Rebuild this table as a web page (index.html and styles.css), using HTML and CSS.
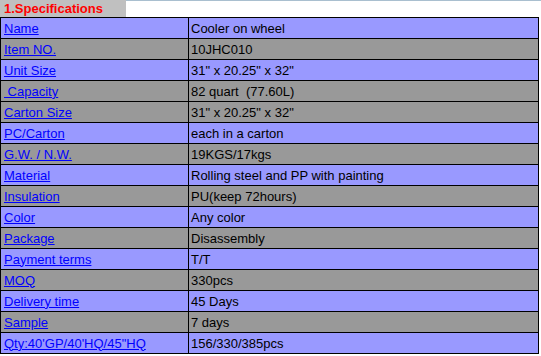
FILE: index.html
```html
<!DOCTYPE html>
<html>
<head>
<meta charset="utf-8">
<link rel="stylesheet" href="styles.css">
</head>
<body>
<div class="head">
  <div class="title">1.Specifications</div>
  <div class="rest"></div>
</div>
<table class="spec">
  <tr class="b"><td class="k"><a href="#">Name</a></td><td>Cooler on wheel</td></tr>
  <tr class="g"><td class="k"><a href="#">Item NO.</a></td><td>10JHC010</td></tr>
  <tr class="b"><td class="k"><a href="#">Unit Size</a></td><td>31" x 20.25" x 32"</td></tr>
  <tr class="g"><td class="k"><a href="#">&nbsp;Capacity</a></td><td>82 quart&nbsp; (77.60L)</td></tr>
  <tr class="g"><td class="k"><a href="#">Carton Size</a></td><td>31" x 20.25" x 32"</td></tr>
  <tr class="b"><td class="k"><a href="#">PC/Carton</a></td><td>each in a carton</td></tr>
  <tr class="g"><td class="k"><a href="#">G.W. / N.W.</a></td><td>19KGS/17kgs</td></tr>
  <tr class="b"><td class="k"><a href="#">Material</a></td><td>Rolling steel and PP with painting</td></tr>
  <tr class="g"><td class="k"><a href="#">Insulation</a></td><td>PU(keep 72hours)</td></tr>
  <tr class="b"><td class="k"><a href="#">Color</a></td><td>Any color</td></tr>
  <tr class="g"><td class="k"><a href="#">Package</a></td><td>Disassembly</td></tr>
  <tr class="b"><td class="k"><a href="#">Payment terms</a></td><td>T/T</td></tr>
  <tr class="g"><td class="k"><a href="#">MOQ</a></td><td>330pcs</td></tr>
  <tr class="b"><td class="k"><a href="#">Delivery time</a></td><td>45 Days</td></tr>
  <tr class="g"><td class="k"><a href="#">Sample</a></td><td>7 days</td></tr>
  <tr class="b"><td class="k"><a href="#">Qty:40'GP/40'HQ/45"HQ</a></td><td>156/330/385pcs</td></tr>
</table>
</body>
</html>
```

FILE: styles.css
```css
html, body {
  margin: 0;
  padding: 0;
  background: #ffffff;
  font-family: "Liberation Sans", Arial, sans-serif;
}
.head {
  display: flex;
  height: 17px;
}
.title {
  width: 122px;
  padding-left: 4px;
  background: #c0c0c0;
  color: #ff0000;
  font-weight: bold;
  font-size: 13px;
  line-height: 18px;
}
.rest {
  flex: 1;
  border-top: 1px solid #a9bfcf;
}
.spec {
  border-collapse: collapse;
  width: 539px;
  font-size: 13px;
  table-layout: fixed;
}
.spec td {
  border: 1px solid #000000;
  height: 21px;
  padding: 0 0 0 2px;
  box-sizing: border-box;
  color: #000000;
  line-height: 15px;
  white-space: nowrap;
  overflow: hidden;
}
.spec td.k {
  width: 188px;
  padding-left: 3px;
}
.spec a {
  color: #0000ff;
  text-decoration: underline;
}
.b td { background: #9999ff; }
.g td { background: #999999; }
```
